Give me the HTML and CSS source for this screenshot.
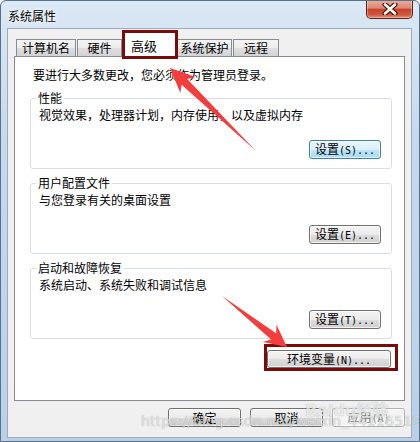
FILE: index.html
```html
<!DOCTYPE html>
<html lang="zh-CN">
<head>
    <meta charset="UTF-8">
    <title>系统属性</title>
    <link rel="stylesheet" href="styles.css">
</head>
<body>
    <div class="window">
        <div class="titlebar">
            <span class="title">系统属性</span>
            <button class="close" type="button">
                <svg width="16" height="12" viewBox="0 0 16 12">
                    <path d="M3 1.5 L13 10.5 M13 1.5 L3 10.5" stroke="#3b1810" stroke-width="5" stroke-linecap="round"/>
                    <path d="M3 1.5 L13 10.5 M13 1.5 L3 10.5" stroke="#fff" stroke-width="2.6" stroke-linecap="round"/>
                </svg>
            </button>
        </div>

        <div class="client">
            <!-- Вкладки -->
            <div class="tabs">
                <div class="tab tab-name">计算机名</div>
                <div class="tab tab-hw">硬件</div>
                <div class="tab tab-active">高级</div>
                <div class="tab tab-protect">系统保护</div>
                <div class="tab tab-remote">远程</div>
            </div>

            <div class="panel">
                <div class="intro">要进行大多数更改，您必须作为管理员登录。</div>

                <fieldset class="group">
                    <legend>性能</legend>
                    <div class="group-text">视觉效果，处理器计划，内存使用，以及虚拟内存</div>
                    <div class="group-actions">
                        <button class="btn btn-hot" type="button">设置<span class="mono">(S)...</span></button>
                    </div>
                </fieldset>

                <fieldset class="group">
                    <legend>用户配置文件</legend>
                    <div class="group-text">与您登录有关的桌面设置</div>
                    <div class="group-actions">
                        <button class="btn" type="button">设置<span class="mono">(E)...</span></button>
                    </div>
                </fieldset>

                <fieldset class="group">
                    <legend>启动和故障恢复</legend>
                    <div class="group-text">系统启动、系统失败和调试信息</div>
                    <div class="group-actions">
                        <button class="btn" type="button">设置<span class="mono">(T)...</span></button>
                    </div>
                </fieldset>

                <div class="env-row">
                    <div class="highlight">
                        <button class="btn btn-env" type="button">环境变量<span class="mono">(N)...</span></button>
                    </div>
                </div>
            </div>

            <!-- Кнопки диалога -->
            <div class="dialog-buttons">
                <button class="btn btn-dialog" type="button">确定</button>
                <button class="btn btn-dialog" type="button">取消</button>
                <button class="btn btn-dialog btn-disabled" type="button">应用<span class="mono">(A)</span></button>
            </div>
        </div>

        <div class="watermark-logo">Bai<span class="paw">du</span>经验</div>
        <div class="watermark-url">https://blog.csdn.net/weixin_44116519</div>

        <svg class="arrows" width="420" height="442" viewBox="0 0 420 442">
            <polygon points="170,68 195.6,77.1 187.2,78.9 256,151 181.6,84.7 180.4,92.9" fill="#f43d3d"/>
            <polygon points="287,347 262.9,342.1 271.1,339.6 222,296 276.1,333.3 276.5,324.7" fill="#f43d3d"/>
        </svg>
    </div>
</body>
</html>
```

FILE: styles.css
```css
body {
    margin: 0;
    font-family: "Noto Sans CJK SC", sans-serif;
    font-size: 12px;
    color: #000;
}

.window {
    position: relative;
    width: 420px;
    height: 442px;
    box-sizing: border-box;
    border: 1px solid #5a7089;
    border-radius: 6px 6px 0 0;
    background: linear-gradient(180deg, #dbe8f5 0%, #c6daee 30%, #b9d0e8 100%);
    overflow: hidden;
    display: flex;
    flex-direction: column;
}

.titlebar {
    height: 27px;
    display: flex;
    align-items: flex-start;
}

.title {
    padding: 7px 0 0 7px;
    line-height: 16px;
    text-shadow: 0 0 6px #fff, 0 0 3px #fff;
}

.close {
    margin: -1px 6px 0 auto;
    width: 47px;
    height: 19px;
    padding: 0;
    border: 1px solid #5b2318;
    border-top: none;
    border-radius: 0 0 5px 5px;
    background: linear-gradient(180deg, #eab0a2 0%, #dd8470 45%, #c7442b 52%, #cf563d 80%, #e08c70 100%);
    box-shadow: inset 0 0 0 1px rgba(255, 255, 255, 0.35);
    display: flex;
    align-items: center;
    justify-content: center;
}

.client {
    margin-left: 6px;
    width: 405px;
    height: 410px;
    box-sizing: border-box;
    border: 1px solid #9eabba;
    background: #f0f0f0;
}

/* Вкладки */
.tabs {
    height: 27px;
    padding-left: 8px;
    display: flex;
    align-items: flex-end;
}

.tab {
    box-sizing: border-box;
    height: 17px;
    border: 1px solid #898c95;
    border-bottom: none;
    background: linear-gradient(180deg, #f4f4f4 0%, #ececec 50%, #dfdfdf 51%, #d3d3d3 100%);
    line-height: 16px;
    text-align: center;
}

.tab-name { width: 60px; }
.tab-hw { width: 45px; margin-left: 1px; }
.tab-protect { width: 55px; margin-left: -1px; }
.tab-remote { width: 46px; margin-left: 1px; }

.tab-active {
    position: relative;
    z-index: 2;
    width: 56px;
    height: 29px;
    margin-bottom: -3px;
    border: 3px solid #7a0b0b;
    background: #fff;
    text-align: left;
    padding: 5px 0 0 6px;
    font-size: 13px;
}

.panel {
    margin: 0 6px;
    height: 345px;
    box-sizing: border-box;
    border: 1px solid #898c95;
    background: #fff;
    padding: 10px 12px 0 15px;
    display: flex;
    flex-direction: column;
}

.intro {
    line-height: 16px;
    padding-left: 3px;
}

.group {
    margin: 7px 0 0;
    padding: 0 10px 9px 8px;
    border: 1px solid #d5dfe5;
    border-radius: 3px;
}

.group:first-of-type {
    margin-top: 8px;
}

.group legend {
    margin-left: -3px;
    padding: 0 2px;
    line-height: 14px;
}

.group-text {
    margin-top: 2px;
    line-height: 16px;
}

.group-actions {
    margin-top: 17px;
    display: flex;
    justify-content: flex-end;
}

.btn {
    box-sizing: border-box;
    width: 72px;
    height: 19px;
    padding: 0;
    border: 1px solid #707070;
    border-radius: 3px;
    background: linear-gradient(180deg, #f3f3f3 0%, #ebebeb 50%, #dddddd 51%, #cfcfcf 100%);
    box-shadow: inset 0 0 0 1px rgba(255, 255, 255, 0.7);
    font-family: "Noto Sans CJK SC", sans-serif;
    font-size: 12px;
    line-height: 16px;
    color: #000;
}

.btn-hot {
    border-color: #3c7fb1;
    background: linear-gradient(180deg, #eaf6fd 0%, #d9f0fc 50%, #bee6fd 51%, #a7d9f5 100%);
}

.mono {
    font-family: "DejaVu Sans Mono", monospace;
    font-size: 10px;
}

.env-row {
    margin-top: 5px;
    display: flex;
    justify-content: flex-end;
}

.highlight {
    margin-right: -6px;
    padding: 3px 4px 0 0;
    border: 3px solid #7a0b0b;
}

.btn-env {
    width: 124px;
    height: 18px;
}

.dialog-buttons {
    margin: 7px 6px 0 0;
    display: flex;
    justify-content: flex-end;
    gap: 9px;
}

.btn-dialog {
    width: 73px;
}

.btn-disabled {
    border-color: #adb2b5;
    background: #f4f4f4;
    color: #838383;
}

/* Водяные знаки */
.watermark-logo {
    position: absolute;
    left: 304px;
    top: 396px;
    font-family: "DejaVu Sans", "Noto Sans CJK SC", sans-serif;
    font-size: 16px;
    font-weight: bold;
    color: rgba(255, 255, 255, 0.75);
    text-shadow: 0 0 1px rgba(0, 0, 0, 0.35);
}

.watermark-url {
    position: absolute;
    left: 140px;
    top: 412px;
    font-family: "DejaVu Sans", sans-serif;
    font-size: 14px;
    letter-spacing: 0.2px;
    color: rgba(255, 255, 255, 0.7);
    text-shadow: 0 0 1px rgba(0, 0, 0, 0.4);
}

.arrows {
    position: absolute;
    left: -1px;
    top: -1px;
    pointer-events: none;
}
```
